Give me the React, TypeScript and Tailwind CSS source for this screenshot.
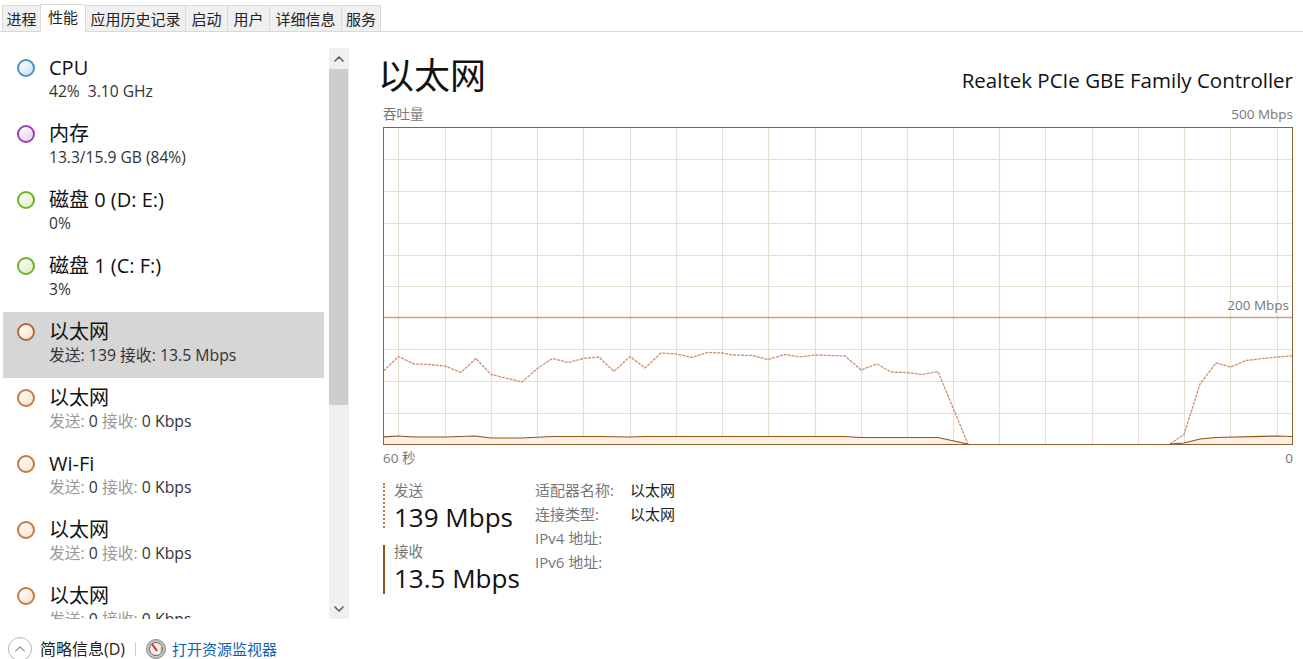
import { ChevronDown, ChevronUp } from "lucide-react"

const font = { fontFamily: '"Open Sans", "Noto Sans CJK SC", sans-serif' }

const tabs = [
    { label: "进程", w: "w-[38px]" },
    { label: "性能", w: "w-[45px]", active: true },
    { label: "应用历史记录", w: "w-[100px]" },
    { label: "启动", w: "w-[42px]" },
    { label: "用户", w: "w-[42px]" },
    { label: "详细信息", w: "w-[72px]" },
    { label: "服务", w: "w-[40px]" },
]

const items = [
    { name: "CPU", sub: "42%  3.10 GHz", dot: "border-[#4a94bf] from-[#ffffff] to-[#c4e0f3]" },
    { name: "内存", sub: "13.3/15.9 GB (84%)", dot: "border-[#9a3fb5] from-[#ffffff] to-[#e8cdf1]" },
    { name: "磁盘 0 (D: E:)", sub: "0%", dot: "border-[#6fb02c] from-[#ffffff] to-[#d8efbb]" },
    { name: "磁盘 1 (C: F:)", sub: "3%", dot: "border-[#6fb02c] from-[#ffffff] to-[#d8efbb]" },
    { name: "以太网", send: "139", recv: "13.5 Mbps", selected: true, dot: "border-[#b0683a] from-[#ffffff] to-[#f8dfc8]" },
    { name: "以太网", send: "0", recv: "0 Kbps", dot: "border-[#c47b45] from-[#ffffff] to-[#f8dfc8]" },
    { name: "Wi-Fi", send: "0", recv: "0 Kbps", dot: "border-[#c47b45] from-[#ffffff] to-[#f8dfc8]" },
    { name: "以太网", send: "0", recv: "0 Kbps", dot: "border-[#c47b45] from-[#ffffff] to-[#f8dfc8]" },
    { name: "以太网", send: "0", recv: "0 Kbps", dot: "border-[#c47b45] from-[#ffffff] to-[#f8dfc8]" },
]

// chart points are in page pixels, shifted by the chart's top left corner
const toPoints = (pts: number[][]) => pts.map(([x, y]) => `${x - 383},${y - 127}`).join(" ")

const sendA = [[383.5,371],[398.5,356.5],[414,364],[429,364.5],[445,366],[461,372.5],[476,358.5],[491,374.5],[522,382],[538,368],[552.5,358.5],[568,362.5],[583,358.5],[599,357],[614,371.5],[630,356.5],[645,368],[661,353],[677,354],[692,357.5],[707,352.5],[722,353],[733,355],[753,355.5],[768,359.5],[785,354.5],[799,357],[815,355],[845,356],[861,370],[877,364],[891,372],[906,372.5],[922,374.5],[938,371.5],[968,444]]
const sendB = [[1170,444],[1184,434.5],[1200,384],[1216,363],[1231,367],[1246,360.5],[1277,357],[1292,356]]
const recvA = [[383.5,437],[398,436],[414,437],[445,437],[475,436],[491,438],[522,438],[552,436.5],[600,436.5],[630,437],[645,436.5],[661,436.5],[845,436.5],[860,437.5],[938,437.5],[968,444]]
const recvB = [[1170,444],[1184,443],[1200,439],[1216,437.5],[1277,436],[1292,436.5]]

const vLines = [15, 62, 108, 154, 200, 247, 293, 339, 385, 432, 478, 524, 570, 616, 662, 709, 755, 801, 847, 894]
const hLines = [32, 64, 96, 128, 159, 222, 254, 286]

const Chart = () => (
    <div className="relative w-[910px] h-[318px] border border-[#8f5f30] bg-white">
        <svg className="block" width="908" height="316" viewBox="1 1 908 316">
            {vLines.map((x) => <line key={x} x1={x + 0.5} x2={x + 0.5} y1="0" y2="318" stroke="#e8dfd3" strokeWidth="1.2" />)}
            {hLines.map((y) => <line key={y} x1="0" x2="910" y1={y + 0.5} y2={y + 0.5} stroke="#e8dfd3" strokeWidth="1.2" />)}
            <polygon points={`0.5,317 ${toPoints(recvA)} 585,317`} fill="#fcefe3" />
            <polygon points={`787,317 ${toPoints(recvB)} 909,317`} fill="#fcefe3" />
            <line x1="0" x2="910" y1="190.5" y2="190.5" stroke="#c8a582" strokeWidth="1.4" />
            <polyline points={toPoints(sendA)} fill="none" stroke="#cf8e6c" strokeWidth="1.3" strokeDasharray="3 1" />
            <polyline points={toPoints(sendB)} fill="none" stroke="#cf8e6c" strokeWidth="1.3" strokeDasharray="3 1" />
            <polyline points={toPoints(recvA)} fill="none" stroke="#8f5420" strokeWidth="1.2" />
            <polyline points={toPoints(recvB)} fill="none" stroke="#8f5420" strokeWidth="1.2" />
        </svg>
        <span className="absolute right-[3px] top-[168px] text-[13.5px] leading-[18px] text-[#777]">200 Mbps</span>
    </div>
)

const SideItem = ({ item }: { item: (typeof items)[number] }) => (
    <div className={`h-[66px] ml-[3px] w-[321px] shrink-0 flex gap-[14px] pl-[14px] pt-[7px] ${item.selected ? "bg-[#d6d6d6]" : ""}`}>
        <div className={`w-[18px] h-[18px] mt-[4px] rounded-full border-2 bg-gradient-to-br ${item.dot}`} />
        <div className="flex flex-col">
            <span className="text-[20px] leading-[26px] text-[#111]">{item.name}</span>
            {item.send ? (
                <span className={`text-[15.8px] leading-[20px] whitespace-pre ${item.selected ? "text-[#333]" : "text-[#999]"}`}>
                    发送: <span className="text-[#333]">{item.send}</span> 接收: <span className="text-[#333]">{item.recv}</span>
                </span>
            ) : (
                <span className="text-[15.6px] leading-[20px] text-[#333] whitespace-pre">{item.sub}</span>
            )}
        </div>
    </div>
)

const App = () => {
    return (
        <div style={font} className="w-[1303px] h-[659px] bg-white overflow-hidden flex flex-col">
            <div className="h-[32px] shrink-0 flex items-end pl-[2px] border-b border-[#d9d9d9]">
                {tabs.map((t) => (
                    <div
                        key={t.label}
                        className={`${t.w} flex justify-center text-[15px] text-[#222] border-l border-t border-[#d9d9d9] last:border-r ${t.active ? "h-[28px] bg-white leading-[25px] -mb-px" : "h-[26px] bg-[#f0f0f0] leading-[27px]"}`}
                    >
                        {t.label}
                    </div>
                ))}
            </div>

            <div className="flex pt-[16px] shrink-0">
                <div className="w-[329px] h-[571px] overflow-hidden flex flex-col shrink-0">
                    {items.map((item, i) => <SideItem key={i} item={item} />)}
                </div>
                <div className="w-[20px] h-[571px] bg-[#f0f0f0] flex flex-col shrink-0">
                    <div className="h-[21px] flex items-center justify-center text-[#606060]">
                        <ChevronUp size={16} strokeWidth={2.5} />
                    </div>
                    <div className="h-[336px] bg-[#cdcdcd] w-[19px]" />
                    <div className="flex-1" />
                    <div className="h-[21px] flex items-center justify-center text-[#606060]">
                        <ChevronDown size={16} strokeWidth={2.5} />
                    </div>
                </div>

                <div className="flex-1 pl-[29px] pr-[10px] -mt-[1px]">
                    <div className="flex justify-between items-end h-[55px]">
                        <span className="text-[36px] leading-[52px] text-[#111]">以太网</span>
                        <span className="text-[20.5px] leading-[28px] mb-[8px] text-[#111]">Realtek PCIe GBE Family Controller</span>
                    </div>
                    <div className="flex justify-between pl-[5px] text-[13.5px] leading-[18px] text-[#777] mt-[3px] mb-[4px]">
                        <span>吞吐量</span>
                        <span>500 Mbps</span>
                    </div>
                    <div className="pl-[5px]"><Chart /></div>
                    <div className="flex justify-between pl-[5px] text-[13.5px] leading-[18px] text-[#777] mt-[4px]">
                        <span>60 秒</span>
                        <span>0</span>
                    </div>

                    <div className="flex pl-[5px] mt-[16px]">
                        <div className="w-[152px] flex flex-col gap-[17px]">
                            <div className="h-[45px] border-l-2 border-dotted border-[#b87a50] pl-[9px]">
                                <div className="text-[14.5px] leading-[16px] text-[#777]">发送</div>
                                <div className="text-[26px] leading-[32px] mt-[2px] text-[#111] whitespace-nowrap">139 Mbps</div>
                            </div>
                            <div className="h-[49px] border-l-2 border-[#8f5420] pl-[9px]">
                                <div className="text-[14.5px] leading-[14px] text-[#777]">接收</div>
                                <div className="text-[26px] leading-[32px] mt-[3px] text-[#111] whitespace-nowrap">13.5 Mbps</div>
                            </div>
                        </div>
                        <div className="grid grid-cols-[95px_60px] auto-rows-[24px] text-[15px] leading-[20px] -mt-[3px]">
                            <span className="text-[#777]">适配器名称:</span>
                            <span className="text-[#222]">以太网</span>
                            <span className="text-[#777]">连接类型:</span>
                            <span className="text-[#222]">以太网</span>
                            <span className="text-[#777]">IPv4 地址:</span>
                            <span />
                            <span className="text-[#777]">IPv6 地址:</span>
                            <span />
                        </div>
                    </div>
                </div>
            </div>

            <div className="flex items-center h-[32px] mt-[14px] pl-[8px] shrink-0">
                <div className="w-[24px] h-[24px] rounded-full border border-[#b5b5b5] flex items-center justify-center text-[#9a9a9a]">
                    <ChevronUp size={18} strokeWidth={1.5} />
                </div>
                <span className="ml-[8px] w-[85px] text-[16px] whitespace-nowrap text-[#222]">简略信息(D)</span>
                <div className="w-px h-[14px] bg-[#ccc] ml-[10px]" />
                <svg className="ml-[10px]" width="20" height="20" viewBox="0 0 20 20">
                    <circle cx="10" cy="10" r="9.5" fill="#c4c4c4" stroke="#8a8a8a" />
                    <circle cx="10" cy="10" r="6.5" fill="#f5f1e8" stroke="#666" />
                    <path d="M6 5 L11 12" stroke="#c8322b" strokeWidth="2" />
                    <path d="M15 8 A5.5 5.5 0 0 1 15 13" stroke="#d8a05a" strokeWidth="1.5" fill="none" />
                </svg>
                <span className="ml-[6px] text-[15px] text-[#0a62b5]">打开资源监视器</span>
            </div>
        </div>
    )
}

export default App
